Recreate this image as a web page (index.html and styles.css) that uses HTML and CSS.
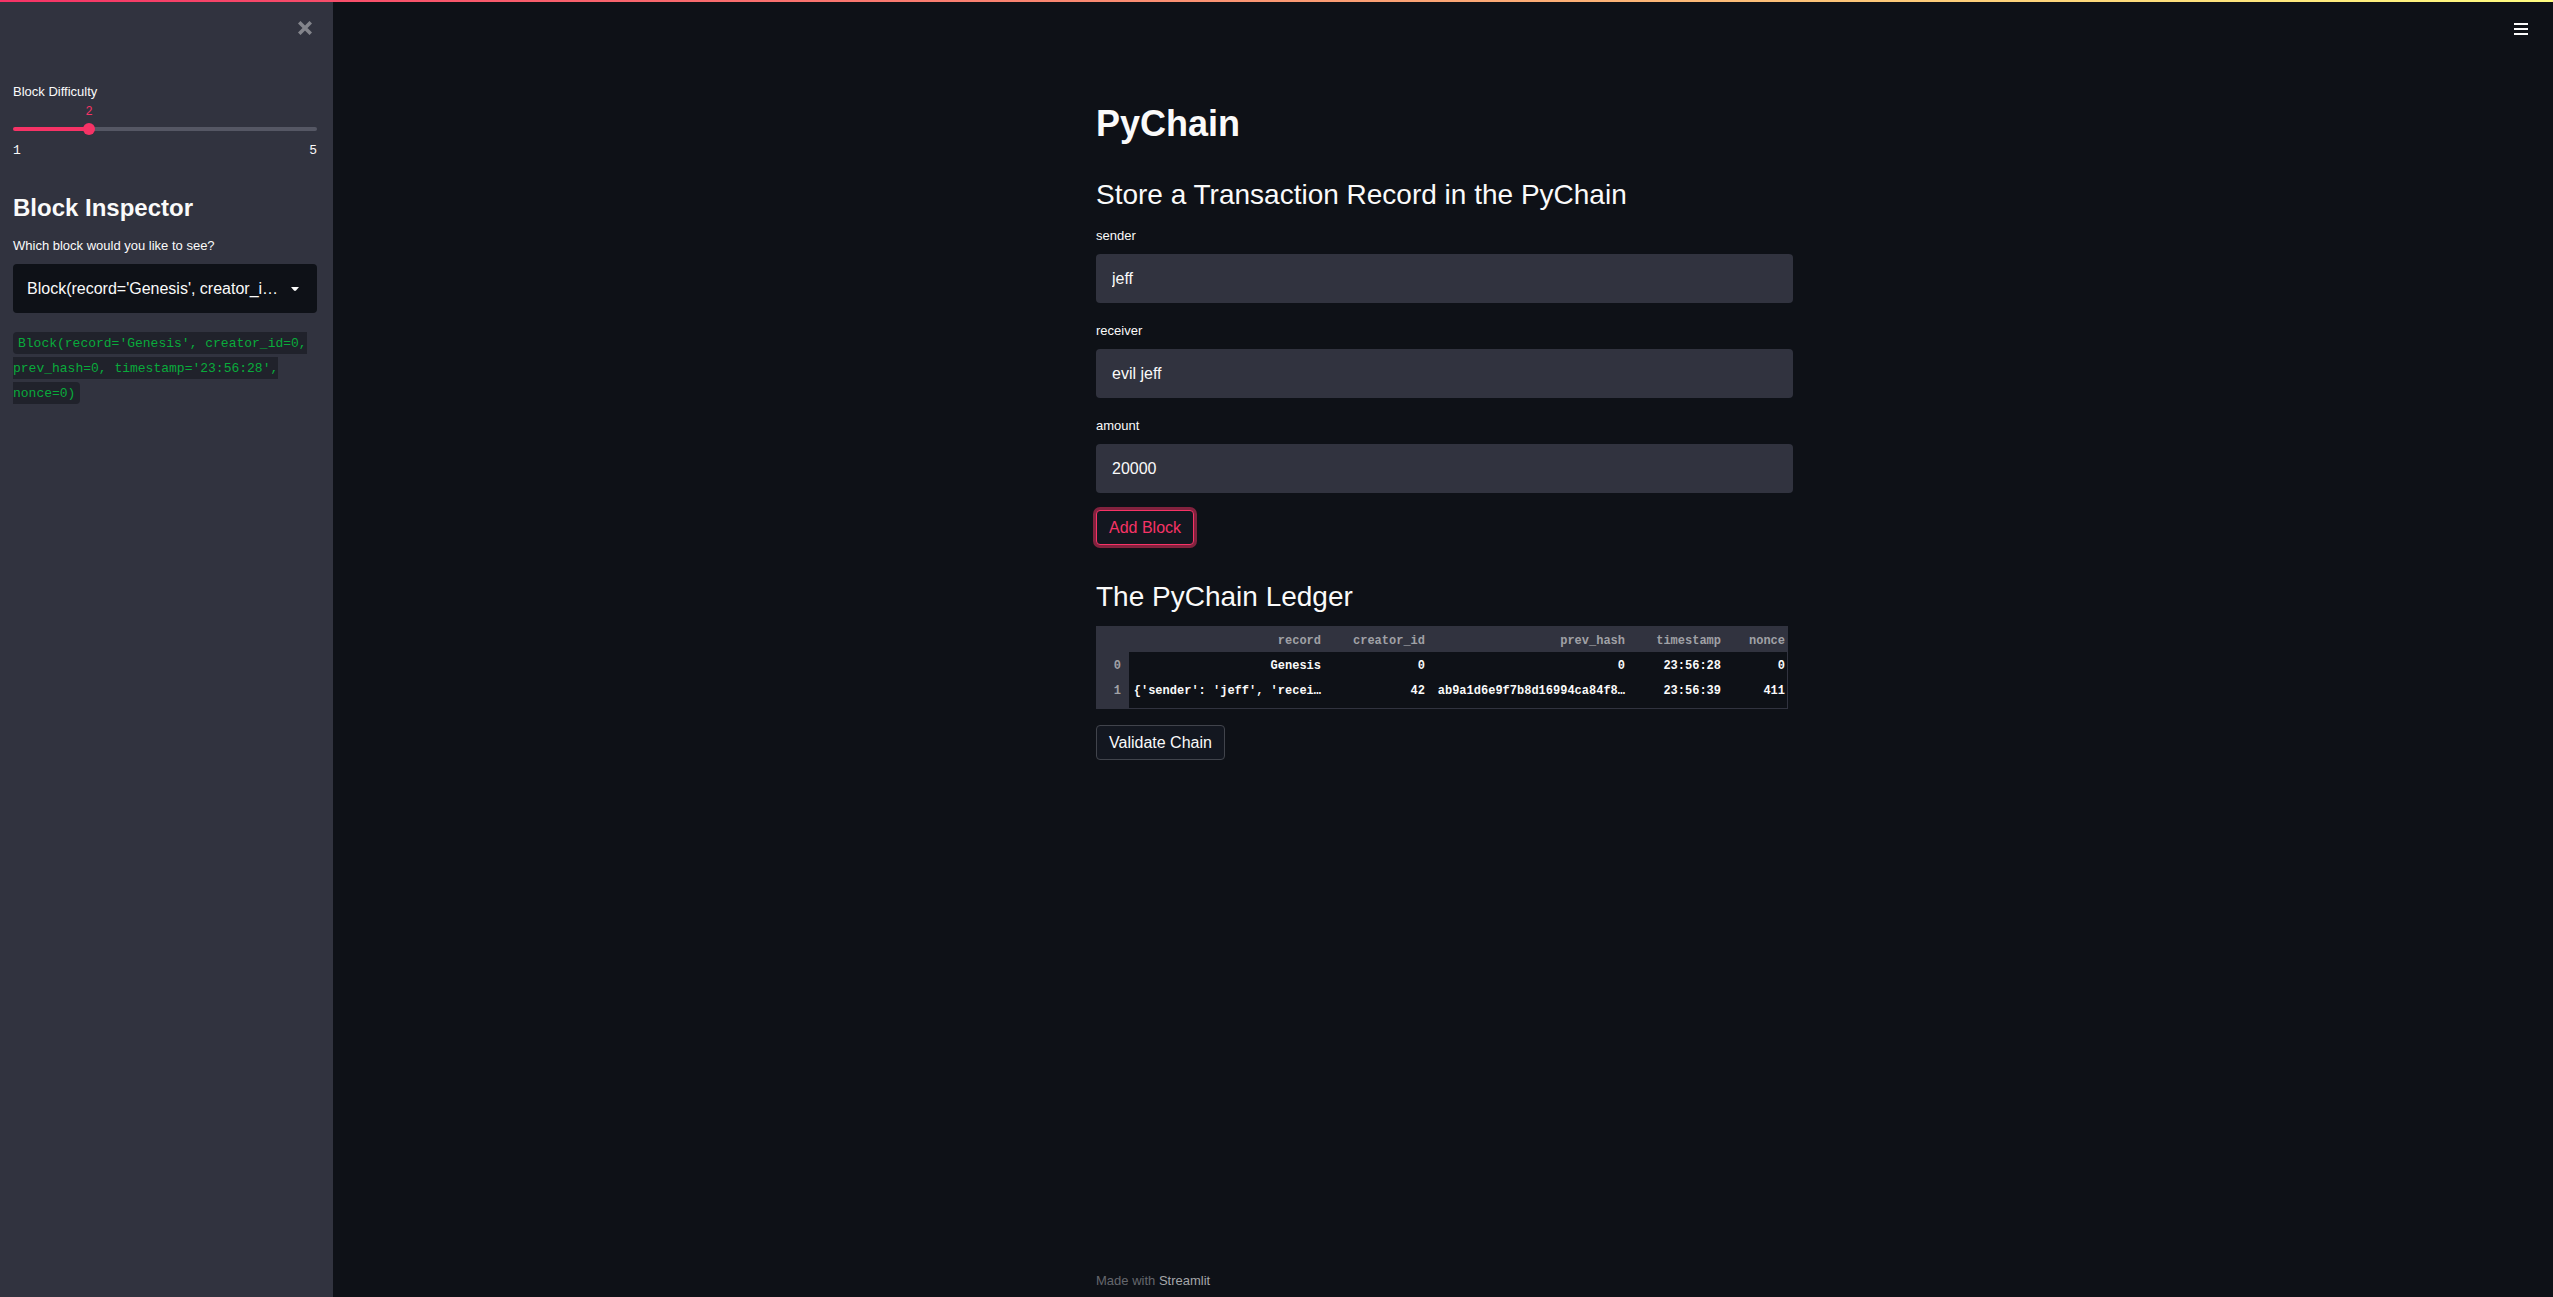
FILE: index.html
```html
<!DOCTYPE html>
<html lang="en">
<head>
<meta charset="utf-8">
<meta name="viewport" content="width=device-width, initial-scale=1">
<title>PyChain</title>
<link rel="stylesheet" href="styles.css">
</head>
<body>
<div class="decoration"></div>
<div class="app">
  <aside class="sidebar">
    <div class="sidebar-top">
      <button class="icon-button" type="button" aria-label="Close sidebar">
        <svg class="close-icon" viewBox="0 0 14 14" width="14" height="14"><path d="M2.5 2.5l9 9M11.5 2.5l-9 9" fill="none" stroke="currentColor" stroke-width="3.6" stroke-linecap="square"/></svg>
      </button>
    </div>
    <div class="slider" style="--value: 25%">
      <label class="label" for="difficulty">Block Difficulty</label>
      <div class="slider-value"><output for="difficulty">2</output></div>
      <div class="slider-rail"><input id="difficulty" type="range" min="1" max="5" value="2"></div>
      <div class="slider-ticks"><span>1</span><span>5</span></div>
    </div>
    <h2 class="sidebar-heading">Block Inspector</h2>
    <label class="label" for="block">Which block would you like to see?</label>
    <div class="select">
      <select id="block">
        <option>Block(record='Genesis', creator_id=0, prev_hash=0, timestamp='23:56:28', nonce=0)</option>
      </select>
      <svg class="caret" viewBox="0 0 8 4" width="8" height="4"><path d="M0 0h8L5 3.5Q4 4.4 3 3.5z" fill="currentColor"/></svg>
    </div>
    <p class="block-detail"><code>Block(record='Genesis', creator_id=0, prev_hash=0, timestamp='23:56:28', nonce=0)</code></p>
  </aside>
  <main class="main">
    <button class="icon-button menu-button" type="button" aria-label="Menu">
      <svg viewBox="0 0 14 14" width="14" height="14"><path d="M0 1h14v2H0zM0 6h14v2H0zM0 11h14v2H0z" fill="currentColor"/></svg>
    </button>
    <div class="content">
      <h1>PyChain</h1>
      <h2>Store a Transaction Record in the PyChain</h2>
      <div class="fields">
        <div class="field"><label class="label" for="sender">sender</label><input id="sender" type="text" value="jeff"></div>
        <div class="field"><label class="label" for="receiver">receiver</label><input id="receiver" type="text" value="evil jeff"></div>
        <div class="field"><label class="label" for="amount">amount</label><input id="amount" type="text" value="20000"></div>
      </div>
      <button class="button focused" type="button">Add Block</button>
      <h2 class="ledger-heading">The PyChain Ledger</h2>
      <table class="ledger">
        <colgroup><col class="c-index"><col class="c-wide"><col class="c-id"><col class="c-wide"><col class="c-time"><col></colgroup>
        <thead>
          <tr><th></th><th scope="col">record</th><th scope="col">creator_id</th><th scope="col">prev_hash</th><th scope="col">timestamp</th><th scope="col">nonce</th></tr>
        </thead>
        <tbody>
          <tr><th scope="row">0</th><td>Genesis</td><td>0</td><td>0</td><td>23:56:28</td><td>0</td></tr>
          <tr><th scope="row">1</th><td>{'sender': 'jeff', 'recei…</td><td>42</td><td>ab9a1d6e9f7b8d16994ca84f8…</td><td>23:56:39</td><td>411</td></tr>
        </tbody>
      </table>
      <button class="button" type="button">Validate Chain</button>
      <footer class="footer">Made with <a href="#">Streamlit</a></footer>
    </div>
  </main>
</div>
</body>
</html>
```
FILE: styles.css
```css
:root {
  --bg: #0e1117;
  --panel: #31333f;
  --text: #fafafa;
  --primary: #f63366;
  --mono: "Liberation Mono", monospace;
}

* { box-sizing: border-box; }

body {
  margin: 0;
  background: var(--bg);
  color: var(--text);
  font: 16px/24px "Liberation Sans", Arial, sans-serif;
}

h1, h2, p { margin: 0; }
button, input, select { font: inherit; color: inherit; }
svg { display: block; }

.decoration {
  position: fixed;
  inset: 0 0 auto;
  z-index: 2;
  height: 2px;
  background: linear-gradient(90deg, #f63366, #fffd80);
}

.app { display: flex; min-height: 100vh; }

.label { display: block; font-size: 13px; line-height: 20px; }

.icon-button {
  padding: 0;
  border: 0;
  background: none;
  cursor: pointer;
}

/* Sidebar */
.sidebar {
  flex: none;
  width: 333px;
  margin-right: 3px;
  padding: 21px 16px 16px 13px;
  background: var(--panel);
}

.sidebar-top {
  display: flex;
  justify-content: flex-end;
  height: 61px;
  padding-right: 5px;
}
.sidebar-top .icon-button { height: 14px; color: #83848b; }

.slider-value {
  padding-left: var(--value);
  color: var(--primary);
  font: 12px/20px var(--mono);
}
.slider-value output {
  display: flex;
  justify-content: center;
  width: 0;
}

.slider-rail {
  display: grid;
  align-items: center;
  height: 14px;
}
.slider-rail::before {
  content: "";
  grid-area: 1 / 1;
  height: 4px;
  border-radius: 2px;
  background: linear-gradient(90deg, var(--primary) var(--value), #555764 var(--value));
}
.slider-rail input {
  grid-area: 1 / 1;
  height: 12px;
  margin: 0 -6px;
  background: none;
  appearance: none;
}
.slider-rail input::-webkit-slider-thumb {
  width: 12px;
  height: 12px;
  border-radius: 50%;
  background: var(--primary);
  appearance: none;
}
.slider-ticks {
  display: flex;
  justify-content: space-between;
  padding-top: 7px;
  font: 13px/16px var(--mono);
}

.sidebar-heading { margin: 34px 0 13px; font-size: 24px; line-height: 30px; }

.select { position: relative; margin-top: 8px; }
.select select {
  display: block;
  width: 100%;
  height: 49px;
  padding: 0 36px 0 14px;
  border: 0;
  border-radius: 4px;
  background: var(--bg);
  text-overflow: ellipsis;
  overflow: hidden;
  white-space: nowrap;
  appearance: none;
}
.caret {
  position: absolute;
  top: 23px;
  right: 18px;
  pointer-events: none;
}

.block-detail { margin-top: 18px; font: 13px/25px var(--mono); }
.block-detail code {
  padding: 4px 5px 3px;
  border-radius: 4px;
  background: #20222b;
  color: #09ab3b;
  font: inherit;
}

/* Main column */
.main {
  position: relative;
  flex: 1;
  display: flex;
  justify-content: center;
}
.menu-button { position: absolute; top: 22px; right: 25px; }

.content {
  display: flex;
  flex-direction: column;
  align-items: flex-start;
  width: 100%;
  max-width: 697px;
  padding: 102px 0 6px;
}
.content h1 { font-size: 36px; line-height: 44px; }
.content h2 {
  margin: 31px 0 13px;
  font-size: 28px;
  font-weight: 400;
  line-height: 36px;
}
.content .ledger-heading { margin: 34px 0 11px; }

.fields { display: grid; gap: 18px; width: 100%; margin-bottom: 17px; }
.field input {
  display: block;
  width: 100%;
  height: 49px;
  margin-top: 8px;
  padding: 0 16px;
  border: 0;
  border-radius: 4px;
  background: var(--panel);
}

.button {
  height: 35px;
  padding: 0 12px;
  border: 1px solid #41444c;
  border-radius: 4px;
  background: #131720;
}
.button.focused {
  border-color: var(--primary);
  color: var(--primary);
  box-shadow: 0 0 0 3px rgba(246, 51, 102, 0.5);
}

.ledger {
  table-layout: fixed;
  width: calc(100% - 5px);
  margin-bottom: 16px;
  border: solid var(--panel);
  border-width: 0 1px 1px 0;
  border-spacing: 0;
  font: bold 12px/21px var(--mono);
}
.ledger th, .ledger td {
  height: 25px;
  padding: 4px 8px 0 4px;
  overflow: hidden;
  text-align: right;
  vertical-align: top;
  white-space: nowrap;
}
.ledger th { background: var(--panel); color: #a0a1a6; }
.ledger thead th { height: 26px; padding-top: 5px; }
.ledger tr > :last-child { padding-right: 2px; }
.ledger tbody tr:last-child > * { height: 31px; }
.c-index { width: 33px; }
.c-wide { width: 200px; }
.c-id { width: 104px; }
.c-time { width: 96px; }

.footer {
  margin-top: auto;
  color: #65676d;
  font-size: 13px;
  line-height: 20px;
}
.footer a { color: #a5a6aa; text-decoration: none; }
```
